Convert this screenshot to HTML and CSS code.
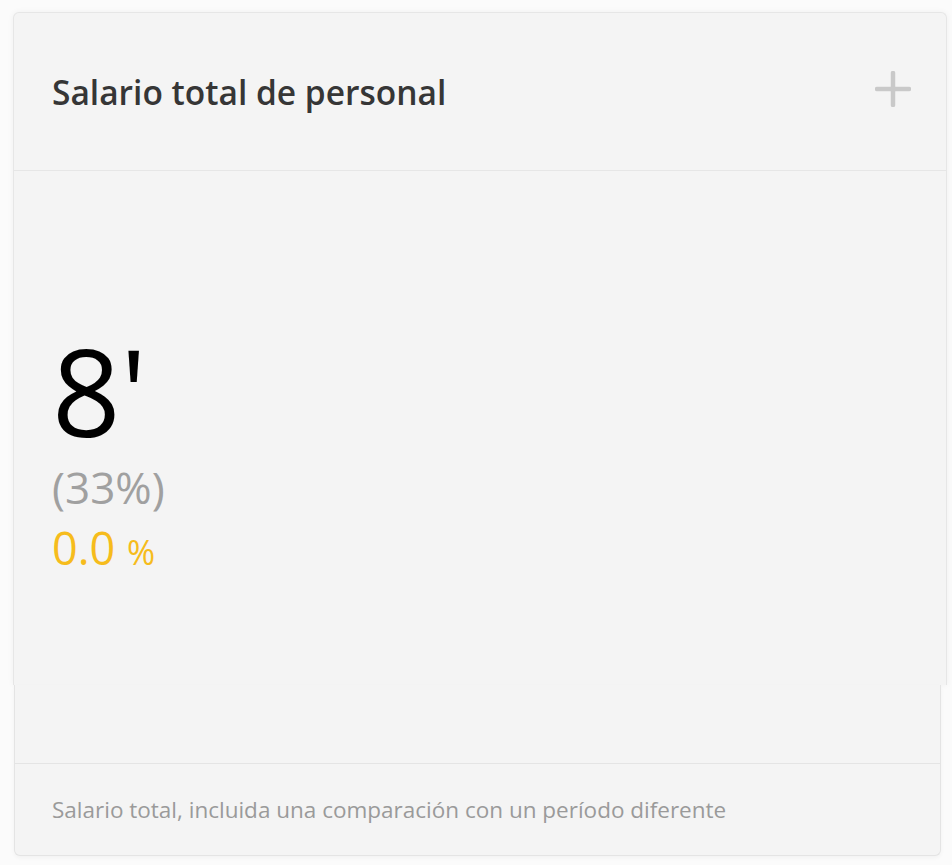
FILE: index.html
```html
<!DOCTYPE html>
<html>
  <head>
    <meta charset="UTF-8">
    <title>Salario total de personal</title>

    <link rel="stylesheet" href="styles.css">
  </head>
  <body>

    <div class='card'>
      <div class='card-main'>
        <div class='card-header'>
          <h2 class='card-title'>Salario total de personal</h2>
          <button class='add-button' title='Añadir'>
            <svg width='36' height='36' viewBox='0 0 36 36'>
              <path d='M18 2 V34 M2 18 H34' stroke='#c9c9c9' stroke-width='4.5' stroke-linecap='round' fill='none'/>
            </svg>
          </button>
        </div>

        <div class='card-body'>
          <div class='kpi-value'>8'</div>
          <div class='kpi-share'>(33%)</div>
          <div class='kpi-change'>0.0 <span class='kpi-unit'>%</span></div>
        </div>
      </div>

      <div class='card-bottom'>
        <div class='card-footer'>
          Salario total, incluida una comparación con un período diferente
        </div>
      </div>
    </div>

  </body>
</html>
```

FILE: styles.css
```css
html, body {
  margin: 0;
  padding: 0;
  height: 100%;
  width: 100%;
}

body {
  background: #fbfbfb;
  font-family: "Open Sans", "Noto Sans", sans-serif;
}

.card {
  padding-top: 12px;
}

.card-main {
  margin-left: 13px;
  width: 934px;
  height: 673px;
  box-sizing: border-box;
  background: #f4f4f4;
  border: 1px solid #e6e6e6;
  border-bottom: none;
  border-radius: 6px 6px 0 0;
  box-shadow: 0 0 6px rgba(0, 0, 0, 0.05);
}

.card-header {
  height: 157px;
  display: flex;
  align-items: center;
  justify-content: space-between;
  padding: 0 35px 0 38px;
  border-bottom: 1px solid #e6e6e6;
}

.card-title {
  margin: 0;
  font-size: 33.5px;
  font-weight: 600;
  color: #363636;
}

.add-button {
  -webkit-appearance: none;
  background: transparent;
  border: none;
  padding: 0;
  width: 36px;
  height: 36px;
  margin-top: -5px;
}

.add-button svg {
  display: block;
}

.card-body {
  padding: 157px 0 0 38px;
}

.kpi-value {
  font-size: 120px;
  line-height: 126px;
  font-weight: 400;
  color: #000;
}

.kpi-share {
  margin-top: 7px;
  font-size: 44px;
  line-height: 52px;
  font-weight: 400;
  color: #a0a0a0;
}

.kpi-change {
  margin-top: 9px;
  font-size: 45px;
  line-height: 52px;
  font-weight: 400;
  color: #f6bc1c;
}

.kpi-unit {
  font-size: 34px;
  font-weight: 400;
}

.card-bottom {
  margin-left: 14px;
  width: 927px;
  height: 171px;
  box-sizing: border-box;
  background: #f4f4f4;
  border: 1px solid #e4e4e4;
  border-top: none;
  border-radius: 0 0 6px 6px;
  padding-top: 78px;
  box-shadow: 0 2px 4px rgba(0, 0, 0, 0.04);
}

.card-footer {
  height: 91px;
  display: flex;
  align-items: center;
  padding-left: 37px;
  border-top: 1px solid #e4e4e4;
  font-size: 22.5px;
  color: #9a9a9a;
}
```
